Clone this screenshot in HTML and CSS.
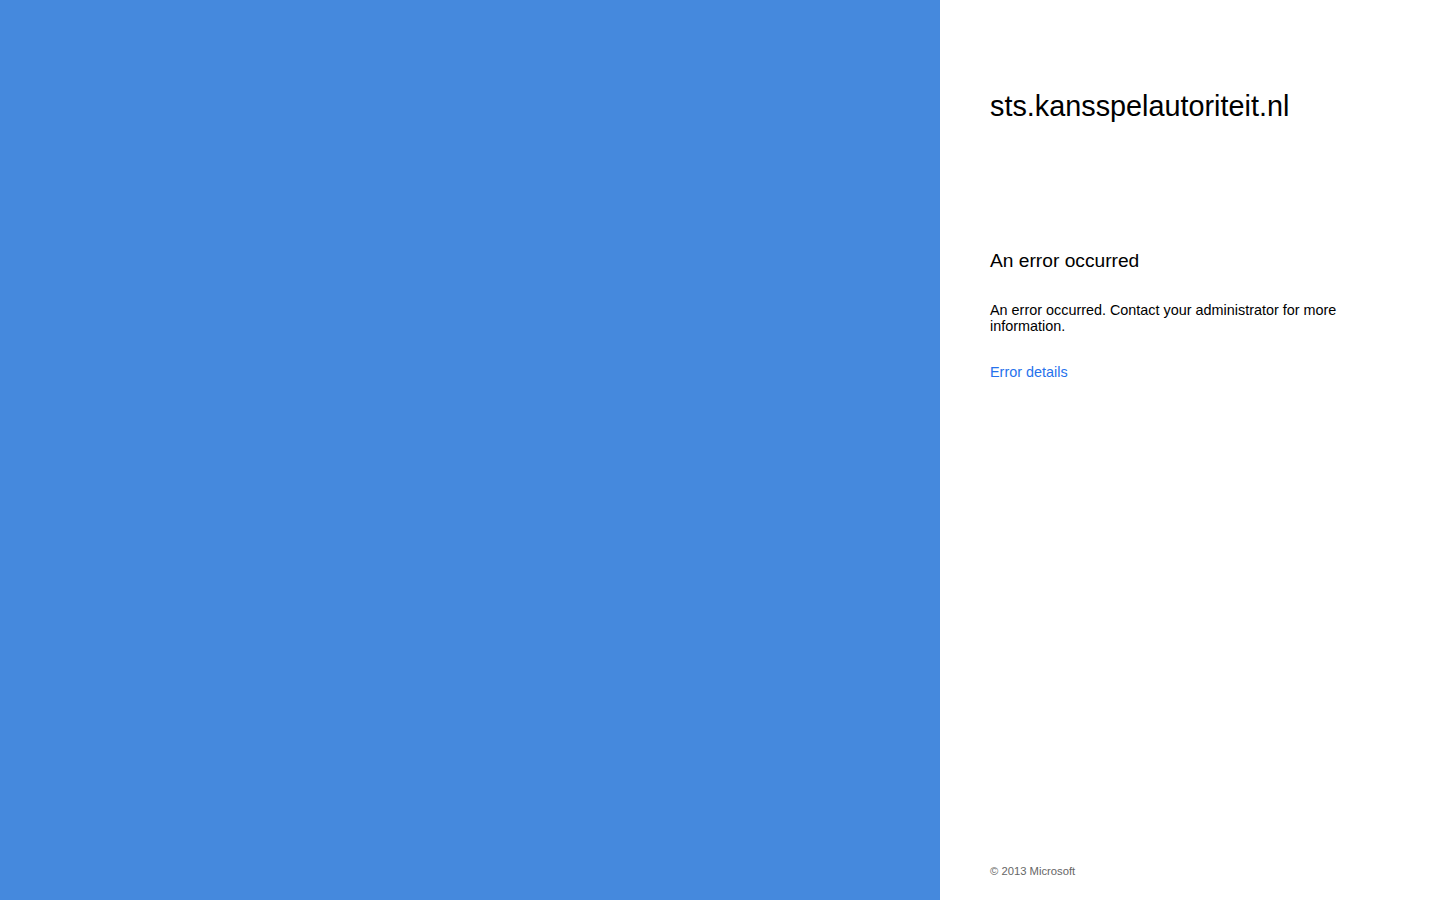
FILE: index.html
```html
<!DOCTYPE html>
<html lang="en">
<head>
<meta charset="utf-8">
<title>Sign In</title>
<link rel="stylesheet" href="styles.css">
</head>
<body>
<div class="page">
  <div class="illustration"></div>
  <div class="content">
    <div class="main">
      <div class="header">sts.kansspelautoriteit.nl</div>
      <div class="title">An error occurred</div>
      <div class="message">An error occurred. Contact your administrator for more information.</div>
      <a class="details" href="#">Error details</a>
    </div>
    <div class="footer">© 2013 Microsoft</div>
  </div>
</div>
</body>
</html>
```

FILE: styles.css
```css
html, body {
  margin: 0;
  padding: 0;
  height: 100%;
}
body {
  font-family: "Liberation Sans", Arial, sans-serif;
  color: #000;
  background: #fff;
}
.page {
  display: flex;
  height: 100vh;
}
.illustration {
  flex: 1;
  background: #4589dd;
}
.content {
  width: 400px;
  padding: 0 50px;
  display: flex;
  flex-direction: column;
}
.main {
  flex: 1;
  padding-top: 88px;
}
.header {
  font-size: 28.8px;
  line-height: 36px;
}
.title {
  margin-top: 125px;
  font-size: 19.2px;
  line-height: 24px;
}
.message {
  margin-top: 29px;
  font-size: 14.4px;
  line-height: 16px;
}
.details {
  display: inline-block;
  margin-top: 30px;
  font-size: 14.4px;
  line-height: 16px;
  color: #2672ec;
  text-decoration: none;
}
.footer {
  font-size: 11.25px;
  line-height: 14px;
  color: #666;
  padding-bottom: 22px;
}
```
